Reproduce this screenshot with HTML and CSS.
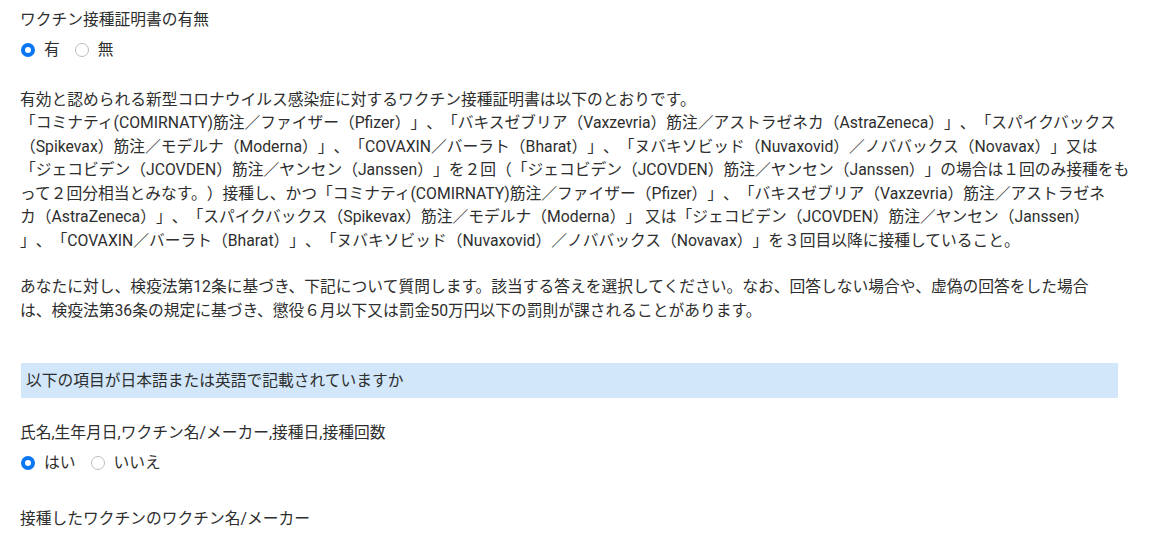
FILE: index.html
```html
<!DOCTYPE html>
<html lang="ja">
<head>
<meta charset="utf-8">
<link rel="stylesheet" href="styles.css">
</head>
<body>
<div class="page">
  <div class="question">ワクチン接種証明書の有無</div>
  <div class="radios">
    <label class="opt"><input type="radio" class="radio" name="q1" checked><span>有</span></label>
    <label class="opt"><input type="radio" class="radio" name="q1"><span>無</span></label>
  </div>

  <p class="para first">有効と認められる新型コロナウイルス感染症に対するワクチン接種証明書は以下のとおりです。<br>「コミナティ(COMIRNATY)筋注／ファイザー（Pfizer）」、「バキスゼブリア（Vaxzevria）筋注／アストラゼネカ（AstraZeneca）」、「スパイクバックス<br>（Spikevax）筋注／モデルナ（Moderna）」、「COVAXIN／バーラト（Bharat）」、「ヌバキソビッド（Nuvaxovid）／ノババックス（Novavax）」又は<br>「ジェコビデン（JCOVDEN）筋注／ヤンセン（Janssen）」を２回（「ジェコビデン（JCOVDEN）筋注／ヤンセン（Janssen）」の場合は１回のみ接種をも<br>って２回分相当とみなす。）接種し、かつ「コミナティ(COMIRNATY)筋注／ファイザー（Pfizer）」、「バキスゼブリア（Vaxzevria）筋注／アストラゼネ<br>カ（AstraZeneca）」、「スパイクバックス（Spikevax）筋注／モデルナ（Moderna）」 又は「ジェコビデン（JCOVDEN）筋注／ヤンセン（Janssen）<br>」、「COVAXIN／バーラト（Bharat）」、「ヌバキソビッド（Nuvaxovid）／ノババックス（Novavax）」を３回目以降に接種していること。</p>

  <p class="para second">あなたに対し、検疫法第12条に基づき、下記について質問します。該当する答えを選択してください。なお、回答しない場合や、虚偽の回答をした場合<br>は、検疫法第36条の規定に基づき、懲役６月以下又は罰金50万円以下の罰則が課されることがあります。</p>

  <div class="section">以下の項目が日本語または英語で記載されていますか</div>

  <div class="question q2">氏名,生年月日,ワクチン名/メーカー,接種日,接種回数</div>
  <div class="radios">
    <label class="opt"><input type="radio" class="radio" name="q2" checked><span>はい</span></label>
    <label class="opt"><input type="radio" class="radio" name="q2"><span>いいえ</span></label>
  </div>

  <div class="question q3">接種したワクチンのワクチン名/メーカー</div>
</div>
</body>
</html>
```

FILE: styles.css
```css
html, body {
  margin: 0;
  padding: 0;
  background: #ffffff;
}

body {
  font-family: Roboto, "Noto Sans CJK JP", "Noto Sans", sans-serif;
  font-size: 15.75px;
  line-height: 23.5px;
  color: #2e2e2e;
  text-spacing-trim: space-all;
}

.page {
  padding: 8px 20px 0 20px;
  width: 1098px;
  white-space: nowrap;
}

.question {
  margin: 0;
}

.radios {
  display: flex;
  align-items: center;
  gap: 14px;
  margin-top: 6px;
  height: 24px;
}

.opt {
  display: flex;
  align-items: center;
  gap: 9px;
}

.radio {
  appearance: none;
  -webkit-appearance: none;
  margin: 0 0 0 1px;
  width: 14px;
  height: 14px;
  border-radius: 50%;
  border: 1px solid #bdbdbd;
  background: #ffffff;
  box-sizing: border-box;
}

.radio:checked {
  border: 4.5px solid #0b76f4;
}

.para {
  margin: 0;
}

.para.first {
  margin-top: 26px;
}

.para.second {
  margin-top: 23px;
}

.section {
  margin-top: 41px;
  margin-left: 1px;
  height: 35px;
  line-height: 35px;
  padding-left: 5px;
  background: #d2e7fa;
}

.q2 {
  margin-top: 23px;
}

.q3 {
  margin-top: 32px;
}
```
